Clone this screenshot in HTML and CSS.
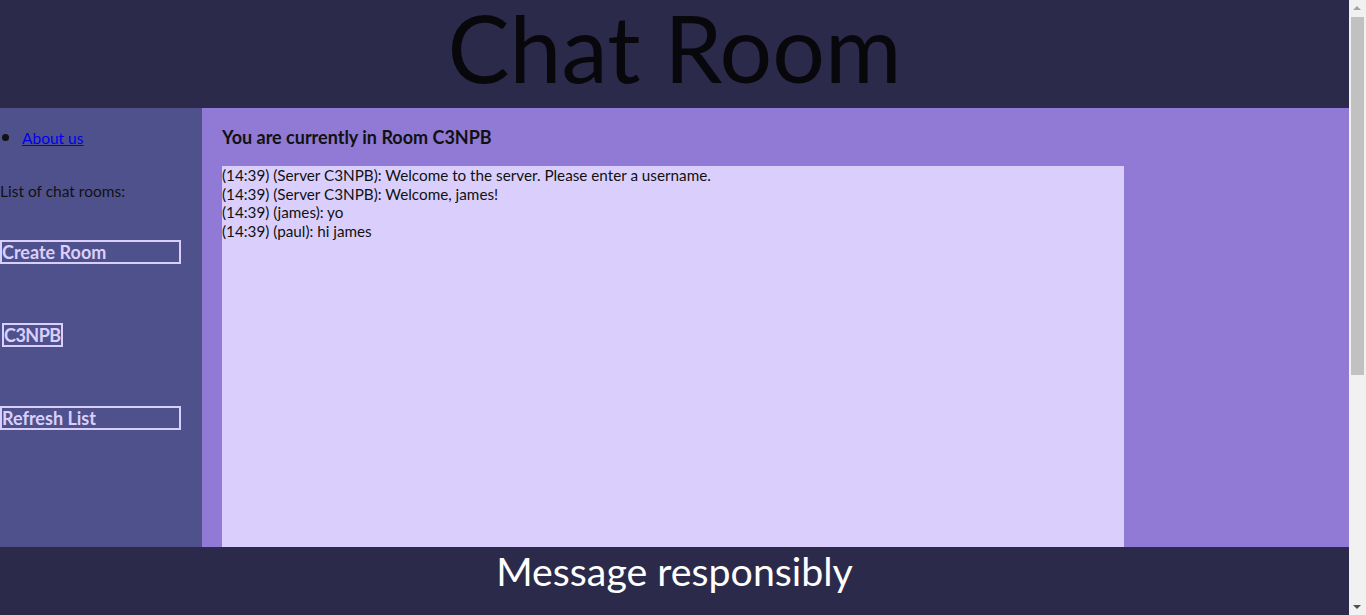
FILE: index.html
```html
<!DOCTYPE html>
<html>
<head>
<meta charset="utf-8">
<title>Chat Room</title>
<link rel="stylesheet" href="styles.css">
</head>
<body>
<header class="top">
  <h1 class="title">Chat Room</h1>
</header>
<div class="layout">
  <aside class="side">
    <ul class="nav">
      <li><a href="#">About us</a></li>
    </ul>
    <p class="rooms-label">List of chat rooms:</p>
    <button class="btn btn-wide">Create Room</button>
    <div class="room-list">
      <button class="btn btn-room">C3NPB</button>
    </div>
    <button class="btn btn-wide">Refresh List</button>
  </aside>
  <main class="main">
    <h2 class="room-title">You are currently in Room C3NPB</h2>
    <div class="chat">
      <div class="msg">(14:39) (Server C3NPB): Welcome to the server. Please enter a username.</div>
      <div class="msg">(14:39) (Server C3NPB): Welcome, james!</div>
      <div class="msg">(14:39) (james): yo</div>
      <div class="msg">(14:39) (paul): hi james</div>
    </div>
  </main>
</div>
<footer class="foot">Message responsibly</footer>
<div class="scrollbar" aria-hidden="true">
  <div class="sb-arrow sb-up"></div>
  <div class="sb-track"><div class="sb-thumb"></div></div>
  <div class="sb-arrow sb-down"></div>
</div>
</body>
</html>
```

FILE: styles.css
```css
html, body {
  margin: 0;
  padding: 0;
}
body {
  font-family: "Lato", "Open Sans", sans-serif;
  background: #907ad6;
  color: #111;
  margin-right: 17px;
}
.top {
  background: #2c2a4a;
  height: 108px;
  box-sizing: border-box;
  padding-top: 0;
  display: flex;
  justify-content: center;
  align-items: flex-start;
}
.title {
  margin: 0;
  font-weight: 400;
  font-size: 93px;
  line-height: 100px;
  position: relative;
  top: -3px;
  color: #08080c;
}
.layout {
  display: flex;
  min-height: 900px;
}
.side {
  width: 202px;
  flex: none;
  background: #4f518c;
  font-size: 15.5px;
}
.nav {
  margin: 16px 0 0 0;
  padding-left: 22px;
}
.nav li::marker {
  font-size: 20px;
}
.nav a {
  color: #0000ee;
}
.rooms-label {
  margin: 35px 0 40px 0;
}
.btn {
  display: block;
  font-family: inherit;
  font-size: 18px;
  font-weight: 700;
  color: #dacffc;
  background: transparent;
  border: 2px solid #dacffc;
  padding: 0;
  height: 24px;
  line-height: 20px;
  text-align: left;
}
.btn-wide {
  width: 181px;
}
.room-list {
  padding: 59px 0 59px 2px;
}
.btn-room {
  padding: 0;
  letter-spacing: -0.5px;
}
.main {
  flex: 1;
  padding: 18px 0 0 20px;
}
.room-title {
  margin: 0 0 19px 0;
  font-size: 18px;
  font-weight: 700;
  color: #111;
}
.chat {
  background: #dacffc;
  width: 902px;
  height: 800px;
  font-size: 15.25px;
  line-height: 18.5px;
  margin-top: -1px;
}
.foot {
  position: fixed;
  left: 0;
  right: 17px;
  bottom: 0;
  height: 68px;
  background: #2c2a4a;
  color: #fff;
  font-size: 39.3px;
  text-align: center;
  line-height: 48px;
}
.scrollbar {
  position: fixed;
  top: 0;
  right: 0;
  bottom: 0;
  width: 17px;
  background: #f1f1f1;
  display: flex;
  flex-direction: column;
}
.sb-arrow {
  height: 17px;
  flex: none;
  position: relative;
}
.sb-arrow::after {
  content: "";
  position: absolute;
  left: 4px;
  border-left: 4px solid transparent;
  border-right: 4px solid transparent;
}
.sb-up::after {
  top: 6px;
  border-bottom: 4px solid #a3a3a3;
}
.sb-down::after {
  top: 7px;
  border-top: 4px solid #505050;
}
.sb-track {
  flex: 1;
  padding: 0 2px;
}
.sb-thumb {
  height: 358px;
  background: #c1c1c1;
}
```
